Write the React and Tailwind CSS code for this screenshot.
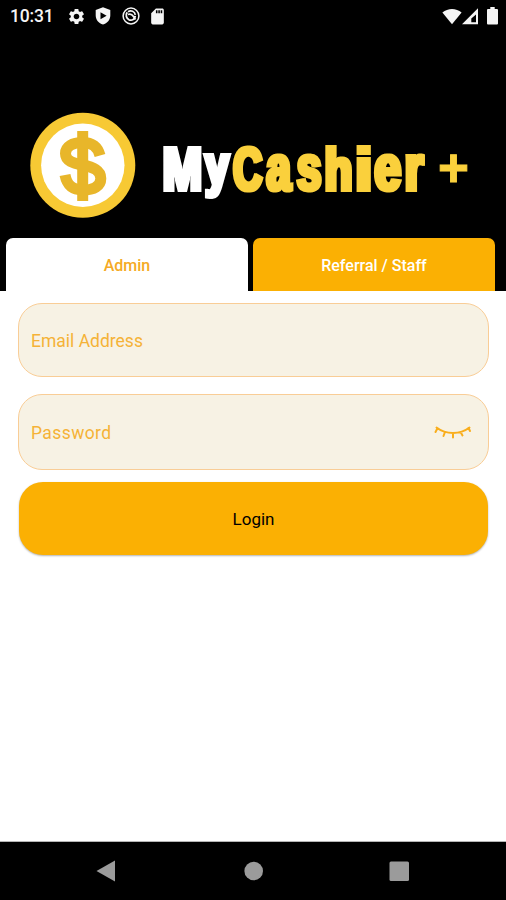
import { MdSettings, MdSdCard } from "react-icons/md";

const nameLetters = [
    {char: "M", x: 162.8, y: 190.3, size: 61.5, width: 39.3, color: "#fff"},
    {char: "y", x: 205.2, y: 185.3, size: 57, width: 23.5, color: "#fff"},
    {char: "C", x: 233.2, y: 190.3, size: 61, width: 28.8, color: "#fad03c"},
    {char: "a", x: 266.5, y: 190, size: 65, width: 24.3, color: "#fad03c"},
    {char: "s", x: 296.9, y: 190, size: 65, width: 24.3, color: "#fad03c"},
    {char: "h", x: 324.8, y: 190.3, size: 58.5, width: 27.5, color: "#fad03c"},
    {char: "i", x: 355.5, y: 190.3, size: 58.5, width: 16.5, color: "#fad03c"},
    {char: "e", x: 374.6, y: 190, size: 65, width: 26.5, color: "#fad03c"},
    {char: "r", x: 404.8, y: 190.3, size: 65, width: 18.5, color: "#fad03c"},
]

const StatusBar = () => {
    return (
        <div className="h-8 shrink-0 flex items-center justify-between pl-[10px] pr-[8px] text-[#f5f5f5]">
            <div className="flex items-center">
                <span className="w-[58px] text-[17.5px] leading-8 font-medium tracking-[-0.2px]">10:31</span>
                <MdSettings className="w-[19px] h-[19px] -ml-[1px]"/>
                <svg className="w-4 h-[18px] ml-[9px]" viewBox="0 0 16 18" fill="currentColor">
                    <path fillRule="evenodd" d="M8 .3 15.3 3v5.500c0 4.300-3.100 7.700-7.300 9.100C3.800 16.200.7 12.800.7 8.500V3ZM5.500 5.300v7L11.600 8.800Z"/>
                </svg>
                <svg className="w-[18px] h-[18px] ml-[11px]" viewBox="0 0 18 18" fill="none" stroke="currentColor">
                    <circle cx="9" cy="9" r="7.900" strokeWidth="1.500"/>
                    <path d="M5.200 5.300C3.300 8 4.300 11.500 7 12.800c3 1.200 6-.500 6.300-4M6 4.800c3-2 6.800-.500 7.300 3M6 7.500c2.500-1 4.500.500 5.500 2l2 3" strokeWidth="1.800"/>
                </svg>
                <MdSdCard className="w-[19px] h-[19px] ml-[8px]"/>
            </div>
            <div className="flex items-center">
                <svg className="w-5 h-[17px]" viewBox="0 0 20 17" fill="currentColor">
                    <path d="M.4 4.600C5.800-.300 14.200-.300 19.600 4.600L10 16.200Z"/>
                </svg>
                <svg className="w-[17px] h-[17px]" viewBox="0 0 17 17" fill="currentColor">
                    <path fillRule="evenodd" d="M0 16.300 16 .3v16ZM9.300 14.300h4.700V6.500L9.300 10.500Z"/>
                </svg>
                <svg className="w-[11px] h-[18px] ml-[8px]" viewBox="0 0 11 18" fill="currentColor">
                    <path d="M3.300 0h4.400v2H10q1 0 1 1v13.500q0 1-1 1H1q-1 0-1-1V3q0-1 1-1h2.300Z"/>
                </svg>
            </div>
        </div>
    )
}

const Logo = () => {
    return (
        <svg className="w-[506px] h-[206px] shrink-0" viewBox="0 32 506 206">
            {/* thickens the upright strokes of the name only */}
            <filter id="heavy" x="-5%" y="-5%" width="110%" height="110%" colorInterpolationFilters="sRGB">
                <feMorphology operator="dilate" radius="1 0.01"/>
            </filter>
            <circle cx="82.8" cy="165.300" r="52.500" fill="#f7c934"/>
            <circle cx="82.8" cy="165.300" r="41.700" fill="#fff"/>
            <g fill="none" stroke="#e8b62a">
                <path d="M82.700 131v70" strokeWidth="11"/>
                <path d="M100 155.500C97.500 146 91.500 142.500 82.500 142.500C72.500 142.500 65.500 146.500 65.500 153.500C65.500 161 73 163 82.500 165C93 167.200 100.800 170 100.800 178.500C100.800 186 94 190 83 190C72 190 67 185 65 175" strokeWidth="11"/>
            </g>
            <text className="font-['Liberation_Sans'] font-bold" filter="url(#heavy)">
                {nameLetters.map((item) => (
                    <tspan
                        key={item.char}
                        x={item.x}
                        y={item.y}
                        fontSize={item.size}
                        textLength={item.width}
                        lengthAdjust="spacingAndGlyphs"
                        fill={item.color}
                        stroke={item.color}
                        strokeWidth="4">{item.char}</tspan>
                ))}
            </text>
            <text className="font-['Liberation_Sans'] font-bold" x="438" y="186.300" fontSize="53" fill="#fad03c" stroke="#fad03c" strokeWidth="1">+</text>
        </svg>
    )
}

const Tabs = () => {
    return (
        <div className="h-[53px] shrink-0 flex gap-[5px] pl-[6px] pr-[11px] text-[16px] font-medium">
            <button className="flex-1 pt-[2px] rounded-t-[7px] bg-white text-[#f5aa24]">Admin</button>
            <button className="flex-1 pt-[2px] rounded-t-[7px] bg-[#fbb003] text-white">Referral / Staff</button>
        </div>
    )
}

const ClosedEye = () => {
    return (
        <svg className="w-[38px] h-[16px]" viewBox="0 0 38 16" fill="none" stroke="#f9ae1c" strokeWidth="2" strokeLinecap="round">
            <path d="M2.500 3.500C12 10.800 26 10.800 35.500 3.500M3.500 4.300 1.500 8M11 8 9.500 12M19 9v4.500M26.500 8l2 3.500M34.500 4l1.500 3"/>
        </svg>
    )
}

const Field = ({label, className, children}) => {
    return (
        <div className={`flex items-center justify-between rounded-[24px] border border-[#f9cd96] bg-[#f7f2e4] pl-[12px] pr-[16px] text-[17.5px] text-[#f5b237] ${className}`}>
            <span className="pt-[2px]">{label}</span>
            {children}
        </div>
    )
}

const NavBar = () => {
    return (
        <div className="h-[59px] shrink-0 flex items-center bg-black border-t border-[#b5b5b5]">
            <svg className="w-[506px] h-[58px]" viewBox="0 842 506 58" fill="#9b9b9b">
                <path d="M96.500 871 115 860.500v21Z"/>
                <circle cx="253.700" cy="871" r="9.300"/>
                <rect x="389.500" y="861.500" width="19.500" height="19.500" rx="1.500"/>
            </svg>
        </div>
    )
}

const App = () => {
    return (
        <div className="w-[506px] h-[900px] flex flex-col overflow-hidden bg-white font-['Roboto',sans-serif]">
            <div className="h-[291px] shrink-0 flex flex-col bg-black">
                <StatusBar/>
                <Logo/>
                <Tabs/>
            </div>
            <div className="flex-1 flex flex-col pl-[18px] pr-[17px] pt-[12px]">
                <Field label="Email Address" className="h-[74px]"/>
                <Field label="Password" className="h-[76px] mt-[17px] tracking-[0.4px]">
                    <ClosedEye/>
                </Field>
                <button className="h-[73px] mt-[12px] mx-[1px] pt-[2px] rounded-[24px] bg-[#fbb003] text-[17px] text-black shadow-[0_1px_2px_rgba(0,0,0,0.3)]">Login</button>
            </div>
            <NavBar/>
        </div>
    )
}
export default App;
